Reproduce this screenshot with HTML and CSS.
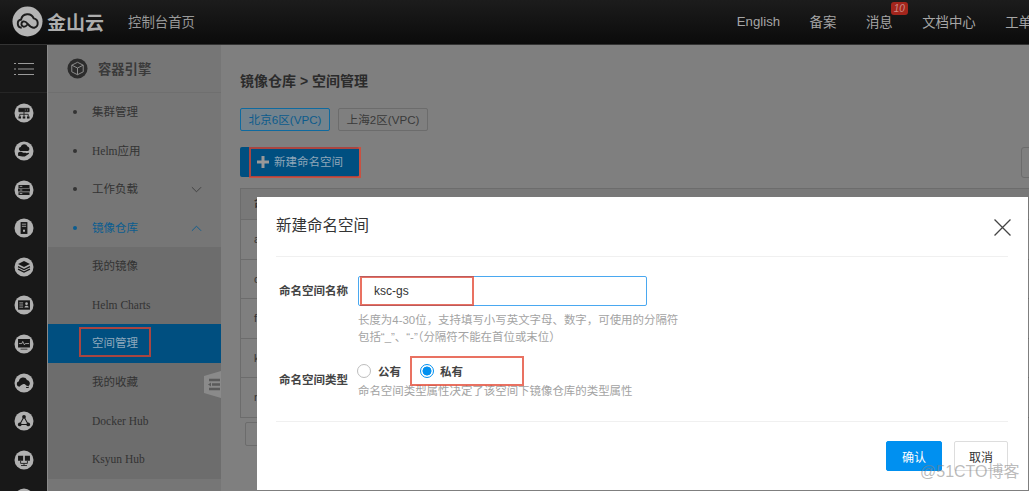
FILE: index.html
```html
<!DOCTYPE html>
<html lang="zh">
<head>
<meta charset="utf-8">
<title>新建命名空间</title>
<link rel="stylesheet" href="styles.css">
</head>
<body>
<header class="topbar">
  <div class="brand">
    <svg class="logo" viewBox="0 0 32 32"><circle cx="16" cy="16" r="15.5" fill="#b4b4b4"/><path d="M10 22.500a4.300 4.300 0 0 1-.6-8.500 6.800 6.800 0 0 1 13-1.200 5 5 0 0 1 .6 9.700c-3 .4-4.600-1.600-6.500-3.800-1.800-2.100-3.300-3.300-5-2.700a2.800 2.800 0 0 0 .2 5.300c2 .4 3.300-1 4.300-2.200" fill="none" stroke="#1c1c1c" stroke-width="2"/></svg>
    <span class="brand-name">金山云</span>
    <a class="home-link">控制台首页</a>
  </div>
  <nav class="topnav">
    <a class="en">English</a>
    <a>备案</a>
    <a class="msg">消息<i class="badge">10</i></a>
    <a>文档中心</a>
    <a>工单</a>
  </nav>
</header>
<div class="layout">
  <aside class="rail">
    <div class="rail-top">
      <svg class="menu-icon" viewBox="0 0 20 14"><path d="M4 1.500h16M4 7h16M4 12.500h16M0 1.500h2M0 7h2M0 12.500h2" stroke="#9a9a9a" stroke-width="1.200" fill="none"/></svg>
    </div>
    <div class="rail-icons">
      <svg viewBox="0 0 20 20"><circle cx="10" cy="10" r="9.500" fill="#b0b0b0"/><g transform="translate(1.500 1.500) scale(.85)"><path d="M4 4.500h12v4H4zM10 8.500v3M5 14v-2.500h10V14M10 11.500V14" fill="none" stroke="#181818"/><path d="M4 4.500h12v4H4z" fill="#181818"/><rect x="3.500" y="14" width="3" height="2.500" fill="#181818"/><rect x="8.500" y="14" width="3" height="2.500" fill="#181818"/><rect x="13.500" y="14" width="3" height="2.500" fill="#181818"/><path d="M11 6.500h1M13.500 6.500h1" stroke="#b0b0b0"/></g></svg>
      <svg viewBox="0 0 20 20"><circle cx="10" cy="10" r="9.500" fill="#b0b0b0"/><g transform="translate(1.500 1.500) scale(.85)"><path d="M5.500 10a2.500 2.500 0 0 1 .6-4.800 4.200 4.200 0 0 1 8-.4 2.700 2.700 0 0 1 .5 5.200z" fill="#181818"/><path d="M3 12c2-1.500 4-1.500 6 0h3c1 0 1 1.500 0 1.500h-2l5-1.500c1-.2 1.500.8.500 1.500L11 16.500c-3 .5-5-1-8-1z" fill="#181818"/></g></svg>
      <svg viewBox="0 0 20 20"><circle cx="10" cy="10" r="9.500" fill="#b0b0b0"/><g transform="translate(1.500 1.500) scale(.85)"><path d="M3.500 4h13v3.500h-13zM3 8.300h14v3.400H3zM3.500 12.500h13V16h-13z" fill="#181818"/><path d="M5 5.700h3M5 10h3M5 14.200h3" stroke="#b0b0b0"/></g></svg>
      <svg viewBox="0 0 20 20"><circle cx="10" cy="10" r="9.500" fill="#b0b0b0"/><g transform="translate(1.500 1.500) scale(.85)"><path d="M6 3h8v14H6z" fill="#181818"/><path d="M7.500 5.500h5M7.500 8h5" stroke="#b0b0b0"/><rect x="8.800" y="12" width="2.400" height="2.400" fill="#b0b0b0"/></g></svg>
      <svg viewBox="0 0 20 20"><circle cx="10" cy="10" r="9.500" fill="#b0b0b0"/><g transform="translate(1.500 1.500) scale(.85)"><path d="M10 3l7 3.500-7 3.500-7-3.500z" fill="#181818"/><path d="M3 9.500l7 3.500 7-3.500M3 12.500l7 3.500 7-3.500" fill="none" stroke="#181818" stroke-width="1.500"/></g></svg>
      <svg viewBox="0 0 20 20"><circle cx="10" cy="10" r="9.500" fill="#b0b0b0"/><g transform="translate(1.500 1.500) scale(.85)"><path d="M3 4.500h14v11H3z" fill="#181818"/><path d="M4.500 7.500h4.500M4.500 10h4.500M4.500 12.500h4.500" stroke="#b0b0b0"/><circle cx="13" cy="8.500" r="1.600" fill="#b0b0b0"/><path d="M10.500 13c0-3 5-3 5 0z" fill="#b0b0b0"/></g></svg>
      <svg viewBox="0 0 20 20"><circle cx="10" cy="10" r="9.500" fill="#b0b0b0"/><g transform="translate(1.500 1.500) scale(.85)"><path d="M3 4h14v10H3zM6 15.500h8v1H6z" fill="#181818"/><path d="M4 9.500h3.500l1-2.500 2 4 1-1.500H16" fill="none" stroke="#b0b0b0"/></g></svg>
      <svg viewBox="0 0 20 20"><circle cx="10" cy="10" r="9.500" fill="#b0b0b0"/><g transform="translate(1.500 1.500) scale(.85)"><path d="M4.500 14.500a3.300 3.300 0 0 1-.5-6.500 5 5 0 0 1 9.500-1.500 4 4 0 0 1 2.500 6.500c-2 1.500-3.500-.2-5-1.500-1.500-1-3-.5-6.500 3z" fill="#181818"/><path d="M15.500 14.500c-1 1-2 1-3 .5" fill="none" stroke="#181818" stroke-width="1.300"/></g></svg>
      <svg viewBox="0 0 20 20"><circle cx="10" cy="10" r="9.500" fill="#b0b0b0"/><g transform="translate(1.500 1.500) scale(.85)"><path d="M10 5l-5 9h10z" fill="none" stroke="#181818" stroke-width="1.200"/><circle cx="10" cy="5" r="2.200" fill="#181818"/><circle cx="5" cy="14" r="2.200" fill="#181818"/><circle cx="15" cy="14" r="2.200" fill="#181818"/></g></svg>
      <svg viewBox="0 0 20 20"><circle cx="10" cy="10" r="9.500" fill="#b0b0b0"/><g transform="translate(1.500 1.500) scale(.85)"><path d="M3 5h6v6H3zM11 5h6v6h-6z" fill="#181818"/><path d="M6 11v3h8v-3M10 14v2.500M6.500 16.500h7" fill="none" stroke="#181818"/></g></svg>
      <svg viewBox="0 0 20 20"><circle cx="10" cy="10" r="9.500" fill="#b0b0b0"/></svg>
    </div>
  </aside>
  <aside class="sidebar">
    <div class="side-head">
      <svg class="cube" viewBox="0 0 22 22"><circle cx="11" cy="11" r="10.500" fill="#2c2c2c"/><path d="M11 4.500l6 3v7l-6 3-6-3v-7zM5 7.500l6 3 6-3M11 10.500v7" fill="none" stroke="#8f8f8f"/></svg>
      <span>容器引擎</span>
    </div>
    <ul class="menu">
      <li class="item"><b class="dot"></b>集群管理</li>
      <li class="item"><b class="dot"></b>Helm应用</li>
      <li class="item"><b class="dot"></b>工作负载
        <svg class="chev" viewBox="0 0 12 7"><path d="M1 1l5 5 5-5" fill="none" stroke="#3d3d3d"/></svg></li>
      <li class="item open"><b class="dot"></b>镜像仓库
        <svg class="chev" viewBox="0 0 12 7"><path d="M1 6l5-5 5 5" fill="none" stroke="#0b5d90"/></svg></li>
      <li class="subgroup">
        <ul class="submenu">
          <li class="sub">我的镜像</li>
          <li class="sub">Helm Charts</li>
          <li class="sub active">空间管理</li>
          <li class="sub">我的收藏</li>
          <li class="sub">Docker Hub</li>
          <li class="sub">Ksyun Hub</li>
        </ul>
      </li>
    </ul>
    <div class="collapse">
      <svg viewBox="0 0 17 27"><path d="M0 5L17 0v27L0 22z" fill="#8a8a8a"/><path d="M5 9h11M8 13.500h8M5 18h11" stroke="#5a5a5a" stroke-width="2.500"/><path d="M7 11.500l-3 2 3 2z" fill="#5a5a5a"/></svg>
    </div>
  </aside>
  <main class="content">
    <h1 class="crumb">镜像仓库 &gt; 空间管理</h1>
    <div class="tabs">
      <a class="tab selected">北京6区(VPC)</a>
      <a class="tab">上海2区(VPC)</a>
    </div>
    <div class="toolbar">
      <button class="new-btn"><svg viewBox="0 0 12 12"><path d="M4.500 0h3v4.500H12v3H7.500V12h-3V7.500H0v-3h4.500z" fill="#999"/></svg><span>新建命名空间</span></button>
      <span class="search-stub"></span>
    </div>
    <div class="table">
      <div class="row head">命</div>
      <div class="row">a</div>
      <div class="row">c</div>
      <div class="row">f</div>
      <div class="row">k</div>
      <div class="row">n</div>
    </div>
    <div class="pager"><span class="page-btn"></span></div>
  </main>
</div>

<section class="modal">
  <header class="modal-head">
    <h2>新建命名空间</h2>
    <svg class="close" viewBox="0 0 16 16"><path d="M.5.500l15 15M15.500.500l-15 15" stroke="#444" fill="none" stroke-width="1.200"/></svg>
  </header>
  <div class="form">
    <div class="field name-field">
      <label>命名空间名称</label>
      <div class="control">
        <div class="input">ksc-gs</div>
        <p class="help">长度为4-30位，支持填写小写英文字母、数字，可使用的分隔符<br>包括“_”、“-”（分隔符不能在首位或末位）</p>
      </div>
    </div>
    <div class="field type-field">
      <label>命名空间类型</label>
      <div class="control">
        <div class="radios">
          <span class="radio"><i class="ring"></i>公有</span>
          <span class="radio on"><i class="ring"></i>私有</span>
        </div>
        <p class="help">命名空间类型属性决定了该空间下镜像仓库的类型属性</p>
      </div>
    </div>
  </div>
  <footer class="modal-foot">
    <button class="btn primary">确认</button>
    <button class="btn">取消</button>
  </footer>
</section>

<div class="mark mark-new"></div>
<div class="mark mark-side"></div>
<div class="mark mark-input"></div>
<div class="mark mark-radio"></div>
<div class="watermark">@51CTO博客</div>
</body>
</html>
```

FILE: styles.css
```css
* { box-sizing: border-box; }
html, body { margin: 0; height: 100%; }
body {
  width: 1029px; height: 491px; overflow: hidden; position: relative;
  background: #7f7f7f; color: #333;
  font-family: "Liberation Sans", "Noto Sans CJK SC", sans-serif;
  display: flex; flex-direction: column;
}
ul { list-style: none; margin: 0; padding: 0; }
h1, h2, p { margin: 0; }

.topbar {
  height: 45px; flex: none; display: flex; justify-content: space-between; align-items: center;
  background: linear-gradient(#1c1c1c, #0b0b0b); color: #a6a6a6; border-bottom: 1px solid #333;
  padding-bottom: 2px;
}
.brand { display: flex; align-items: center; padding-left: 12px; }
.logo { width: 31px; height: 31px; }
.brand-name { font-size: 19px; font-weight: 700; color: #adadad; margin-left: 4px; width: 57px; white-space: nowrap; }
.home-link { font-size: 13.400px; margin-left: 24px; color: #989898; }
.topnav { display: flex; gap: 29.500px; font-size: 13.400px; margin-right: -3px; align-items: center; white-space: nowrap; }
.topnav .en { font-size: 13.200px; }
.msg { position: relative; }
.badge {
  position: absolute; left: 25px; top: -9px; width: 17px; height: 13px; border-radius: 3px;
  background: #a3251c; color: #c98c87; font-size: 10px; line-height: 13px; text-align: center;
}

.layout { flex: 1; display: flex; min-height: 0; }
.rail { width: 47px; flex: none; background: #181818; }
.rail-top { height: 48px; border-bottom: 1px solid #262626; display: flex; align-items: center; justify-content: center; }
.menu-icon { width: 20px; height: 14px; }
.rail-icons { display: flex; flex-direction: column; align-items: center; gap: 18.600px; padding-top: 9.500px; }
.rail-icons svg { width: 20px; height: 20px; flex: none; }

.sidebar {
  width: 174px; flex: none; background: #767676; position: relative;
  font-family: "Liberation Serif", "Noto Sans CJK SC", serif; font-size: 11.500px; color: #333;
  border-left: 1px solid #8a8a8a;
}
.side-head {
  height: 48px; display: flex; align-items: center; border-bottom: 1px solid #6f6f6f;
  padding-left: 19px; gap: 10px; font-size: 13.300px; font-weight: 700; color: #3a3a3a;
  font-family: "Noto Sans CJK SC", sans-serif;
}
.cube { width: 21px; height: 21px; }
.item { height: 38.500px; display: flex; align-items: center; padding-left: 25px; position: relative; line-height: 16px; }
.dot { width: 4px; height: 4px; border-radius: 50%; background: #333; margin-right: 15px; flex: none; }
.chev { position: absolute; left: 143px; top: 16px; width: 11px; height: 7px; }
.open { color: #0b5d90; }
.open .dot { background: #0b5d90; }
.subgroup { background: #6d6d6d; }
.sub { height: 38.600px; display: flex; align-items: center; padding-left: 44px; line-height: 16px; }
.sub.active { background: #004f80; color: #8fa9bc; }
.collapse { position: absolute; right: 0; top: 326px; width: 17px; height: 27px; display: flex; }
.collapse svg { width: 17px; height: 27px; }

.content { flex: 1; min-width: 0; padding: 26px 0 0 19px; overflow: hidden; }
.crumb { font-size: 14px; font-weight: 700; color: #2b2b2b; line-height: 20px; }
.tabs { display: flex; gap: 8px; margin-top: 17px; }
.tab {
  width: 90px; height: 23px; border: 1px solid #6c6c6c; border-radius: 2px;
  font-size: 11.600px; line-height: 21px; text-align: center; color: #3a3a3a;
}
.tab.selected { border-color: #0f6a9f; background: #74838d; color: #0c5b8c; }
.toolbar { display: flex; align-items: center; justify-content: space-between; margin-top: 16px; margin-right: -20px; position: relative; }
.new-btn {
  width: 119px; height: 30px; border: 0; border-radius: 2px; background: #004f80; color: #8fa6b8;
  font: 11.500px "Liberation Sans", "Noto Sans CJK SC", sans-serif; display: flex; align-items: center; padding: 0 0 2px 17px; gap: 5px;
}
.new-btn svg { width: 12px; height: 12px; margin-top: 2px; }
.search-stub { width: 28px; height: 31px; border: 1px solid #6c6c6c; border-radius: 3px; position: absolute; left: 781px; top: 0; }
.table { margin-top: 11px; border: 1px solid #6c6c6c; border-right: 0; margin-right: -20px; }
.row { height: 39.500px; border-top: 1px solid #6c6c6c; padding-left: 13px; font-size: 11px; line-height: 38px; color: #333; }
.row:first-child { border-top: 0; }
.row.head { height: 30px; background: #787878; line-height: 30px; font-size: 12px; font-weight: 700; }
.pager { margin-top: 4px; padding-left: 5px; }
.page-btn { display: block; width: 30px; height: 24px; border: 1px solid #6c6c6c; border-radius: 2px; }

.modal {
  position: absolute; left: 257px; top: 197px; width: 771px; height: 293px; background: #fff;
  padding: 0 20px 0 19px; display: flex; flex-direction: column;
}
.modal-head { height: 60px; border-bottom: 1px solid #f0f0f0; display: flex; justify-content: space-between; align-items: center; padding-bottom: 5px; flex: none; }
.modal-head h2 { font-size: 15.500px; font-weight: 400; color: #333; }
.close { width: 17px; height: 17px; margin-top: 6px; margin-right: -3px; }
.form { flex: none; height: 165px; padding-top: 19px; border-bottom: 1px solid #f0f0f0; }
.field { display: flex; }
.field label { width: 82px; flex: none; padding-left: 3px; font-size: 11.500px; font-weight: 700; color: #444; font-family: "Noto Sans CJK SC", sans-serif; }
.name-field label { padding-top: 6px; }
.type-field { margin-top: 15px; }
.type-field label { padding-top: 10px; }
.control { flex: 1; }
.input {
  width: 289px; height: 30px; border: 1px solid #4aa8f0; border-radius: 2px; padding-left: 15px;
  font-size: 12px; line-height: 28px; color: #333;
}
.help { font-size: 11.450px; line-height: 17px; color: #a3a3a3; margin-top: 6px; }
.radios { display: flex; gap: 19px; height: 20px; align-items: center; margin-left: -1px; }
.radio { display: flex; align-items: center; gap: 7px; font-size: 11.500px; font-weight: 700; color: #444; font-family: "Noto Sans CJK SC", sans-serif; }
.radio.on { gap: 6px; }
.ring { width: 14px; height: 14px; border: 1px solid #bdbdbd; border-radius: 50%; display: block; }
.on .ring { border-color: #0090f0; background: radial-gradient(circle, #0090f0 0 4.200px, #fff 4.800px); }
.type-field .help { margin-top: 2px; }
.modal-foot { display: flex; justify-content: flex-end; gap: 12px; padding-top: 19px; }
.btn { width: 54px; height: 30px; border: 1px solid #ddd; border-radius: 2px; background: #fff; color: #333; font: 12px "Noto Sans CJK SC", sans-serif; padding: 0; }
.btn.primary { width: 56px; background: #0090f0; border-color: #0090f0; color: #fff; }

.mark { position: absolute; border: 2px solid rgba(226,66,44,.75); }
.mark-new { left: 249px; top: 147px; width: 112px; height: 31px; }
.mark-side { left: 79px; top: 327px; width: 72px; height: 30px; }
.mark-input { left: 360px; top: 276px; width: 114px; height: 30px; }
.mark-radio { left: 410px; top: 356px; width: 114px; height: 30px; }
.watermark { position: absolute; left: 920px; top: 462px; font-size: 16px; line-height: 20px; color: rgba(130,130,130,.55); }
```
